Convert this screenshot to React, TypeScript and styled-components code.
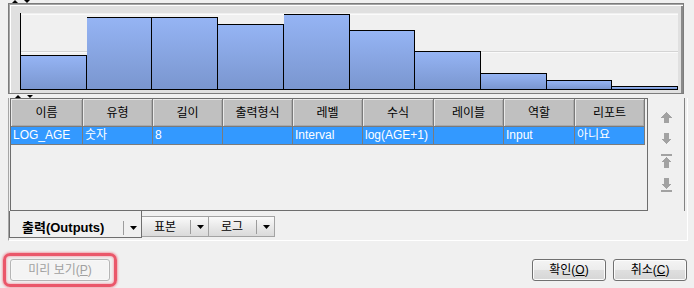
import React from 'react';
import styled, { createGlobalStyle } from 'styled-components';

const GlobalStyle = createGlobalStyle`
  html, body {
    margin: 0;
    padding: 0;
    background: #f0f0f0;
  }
  body {
    font-family: "Liberation Sans", "Noto Sans CJK KR", sans-serif;
    font-size: 12px;
    color: #000;
  }
`;

const Window = styled.div`
  width: 694px;
  height: 288px;
  overflow: hidden;
  background: #f0f0f0;
`;

const Marks = styled.div<{ $left: number; $h: number; $bottom?: boolean }>`
  height: ${(p) => p.$h}px;
  padding-left: ${(p) => p.$left}px;
  display: flex;
  align-items: ${(p) => (p.$bottom ? 'flex-end' : 'flex-start')};
  gap: 6px;
`;

const MarkUp = styled.span`
  width: 0;
  height: 0;
  border-left: 3px solid transparent;
  border-right: 3px solid transparent;
  border-bottom: 3px solid #000;
`;

const MarkDown = styled.span`
  width: 0;
  height: 0;
  border-left: 3px solid transparent;
  border-right: 3px solid transparent;
  border-top: 3px solid #000;
`;

/* ---------- chart ---------- */

const ChartPanel = styled.div`
  box-sizing: border-box;
  margin-left: 8px;
  width: 676px;
  height: 91px;
  border: 1px solid #7c7c7c;
  box-shadow: inset 1px 1px 0 #a4a4a4, inset 2px 2px 0 #fff, inset -2px 0 0 #8a8a8a;
  background: #e0e0e0;
  padding: 9px 5px 3px 11px;
`;

const Plot = styled.div`
  height: 77px;
  border-left: 1px solid #000;
  display: flex;
  align-items: flex-end;
  background:
    linear-gradient(to bottom, transparent 1px, #fbfbfb 1px, #fbfbfb 2px, transparent 2px),
    linear-gradient(to bottom, transparent 38px, #d4d4d4 38px, #d4d4d4 39px, #fafafa 39px, #fafafa 40px, transparent 40px),
    #f0f0f0;
`;

const Bar = styled.div<{ $h: number }>`
  flex: 1;
  box-sizing: border-box;
  height: ${(p) => p.$h}px;
  border: 1px solid #000;
  border-left: none;
  background: linear-gradient(to bottom, #95b4f4, #7a96cf);
`;

/* ---------- grid ---------- */

const COLS = '72px 70px 70px 70px 70px 71px 70px 71px 70px';

const BottomPanel = styled.div`
  box-sizing: border-box;
  margin-left: 8px;
  width: 680px;
  height: 143px;
  border-left: 1px solid #a6a6a6;
  border-right: 1px solid #fff;
  border-bottom: 1px solid #fff;
  display: flex;
  flex-direction: column;
`;

const UpperBox = styled.div`
  box-sizing: border-box;
  width: 676px;
  height: 113px;
  border-right: 1px solid #828282;
  display: flex;
`;

const GridBox = styled.div`
  box-sizing: border-box;
  margin-left: 1px;
  width: 638px;
  height: 113px;
  border: 1px solid #6e6e6e;
  background: #f0f0f0;
`;

const HeaderRow = styled.div`
  display: grid;
  grid-template-columns: ${COLS};
  height: 28px;
`;

const HeaderCell = styled.div`
  box-sizing: border-box;
  background: #c0c0c0;
  border-right: 1px solid #7a7a7a;
  border-bottom: 1px solid #7a7a7a;
  box-shadow: inset 1px 1px 0 #e8e8e8, inset -1px -1px 0 #a9a9a9;
  display: flex;
  align-items: center;
  justify-content: center;
  line-height: 14px;
`;

const DataRow = styled.div`
  display: grid;
  grid-template-columns: ${COLS};
  height: 18px;
`;

const DataCell = styled.div`
  box-sizing: border-box;
  background: #3399ff;
  color: #fff;
  border-right: 1px solid #7b7b7b;
  border-bottom: 1px solid #7b7b7b;
  padding-left: 2px;
  line-height: 17px;
  white-space: nowrap;
  overflow: hidden;
`;

const ArrowColumn = styled.div`
  flex: 1;
  display: flex;
  flex-direction: column;
  align-items: center;
  padding-top: 14px;
  gap: 10px;
`;

const ArrowIcon = styled.svg`
  display: block;
  fill: #a2a2a2;
  shape-rendering: crispEdges;
`;

/* ---------- tabs ---------- */

const TabBar = styled.div`
  height: 29px;
  display: flex;
  align-items: flex-start;
`;

const Tab = styled.div<{ $active?: boolean; $w: number }>`
  box-sizing: border-box;
  width: ${(p) => p.$w}px;
  display: flex;
  align-items: center;
  ${(p) =>
    p.$active
      ? `
    height: 27px;
    padding-top: 8px;
    border: 1px solid #6e6e6e;
    border-top: none;
    background: #f0f0f0;
    font-weight: bold;
    font-size: 13px;
  `
      : `
    margin-top: 5px;
    height: 21px;
    border: 1px solid #a3a3a3;
    border-left: none;
    background: linear-gradient(to bottom, #fafafa, #e9e9e9 50%, #dadada);
  `}
`;

const TabLabel = styled.span`
  flex: 1;
  padding-left: 12px;
  line-height: 14px;
  white-space: nowrap;
`;

const TabSep = styled.span`
  width: 1px;
  height: 14px;
  background: #9c9c9c;
  margin-right: 6px;
`;

const TabArrow = styled.svg`
  display: block;
  margin-right: 4px;
`;

/* ---------- buttons ---------- */

const ButtonBar = styled.div`
  height: 47px;
  padding: 12px 7px 0 3px;
  box-sizing: border-box;
  display: flex;
  align-items: flex-start;
`;

const Highlight = styled.div`
  padding: 3px 4px;
  border: 3px solid rgba(232, 52, 76, 0.82);
  border-radius: 7px;
  box-shadow: 0 0 2px 1px rgba(240, 110, 125, 0.55), inset 0 0 2px 1px rgba(245, 120, 135, 0.45);
`;

const Button = styled.button<{ $w: number; $disabled?: boolean }>`
  box-sizing: border-box;
  width: ${(p) => p.$w}px;
  height: 22px;
  padding: 0;
  font: inherit;
  line-height: 14px;
  border-radius: 3px;
  border: 1px solid ${(p) => (p.$disabled ? '#b5b5b5' : '#707070')};
  color: ${(p) => (p.$disabled ? '#a0a0a0' : '#000')};
  background: ${(p) =>
    p.$disabled ? '#f4f4f4' : 'linear-gradient(to bottom, #f4f4f4, #ececec 50%, #dfdfdf 51%, #d6d6d6)'};
  box-shadow: inset 0 0 0 1px ${(p) => (p.$disabled ? '#f8f8f8' : '#fcfcfc')};
`;

const RightButtons = styled.div`
  margin-left: auto;
  margin-top: 6px;
  display: flex;
  gap: 7px;
`;

const bars = [35, 73, 73, 66, 76, 60, 39, 17, 10, 4];

const headers = ['이름', '유형', '길이', '출력형식', '레벨', '수식', '레이블', '역할', '리포트'];
const row = ['LOG_AGE', '숫자', '8', '', 'Interval', 'log(AGE+1)', '', 'Input', '아니요'];

const DropArrow = () => (
  <TabArrow width="7" height="4" viewBox="0 0 7 4">
    <polygon points="0,0 7,0 3.5,4" fill="#000" />
  </TabArrow>
);

const App = () => {
  return (
    <Window>
      <GlobalStyle />
      <Marks $left={12} $h={3}>
        <MarkUp />
        <MarkDown />
      </Marks>

      <ChartPanel>
        <Plot>
          {bars.map((h, i) => (
            <Bar key={i} $h={h} />
          ))}
        </Plot>
      </ChartPanel>

      <Marks $left={15} $h={4} $bottom>
        <MarkUp />
        <MarkDown />
      </Marks>

      <BottomPanel>
        <UpperBox>
          <GridBox>
            <HeaderRow>
              {headers.map((h) => (
                <HeaderCell key={h}>{h}</HeaderCell>
              ))}
            </HeaderRow>
            <DataRow>
              {row.map((c, i) => (
                <DataCell key={i}>{c}</DataCell>
              ))}
            </DataRow>
          </GridBox>
          <ArrowColumn>
            <ArrowIcon width="11" height="11" viewBox="0 0 11 11">
              <path d="M5.5 0 L11 5.5 H8 V11 H3 V5.5 H0 Z" />
            </ArrowIcon>
            <ArrowIcon width="11" height="11" viewBox="0 0 11 11">
              <path d="M5.5 11 L11 5.5 H8 V0 H3 V5.5 H0 Z" />
            </ArrowIcon>
            <ArrowIcon width="11" height="14" viewBox="0 0 11 14">
              <rect x="0" y="0" width="11" height="2" />
              <path d="M5.5 3 L11 8 H8 V14 H3 V8 H0 Z" />
            </ArrowIcon>
            <ArrowIcon width="11" height="14" viewBox="0 0 11 14">
              <path d="M5.5 11 L11 6 H8 V0 H3 V6 H0 Z" />
              <rect x="0" y="12" width="11" height="2" />
            </ArrowIcon>
          </ArrowColumn>
        </UpperBox>

        <TabBar>
          <Tab $active $w={133}>
            <TabLabel>출력(Outputs)</TabLabel>
            <TabSep />
            <DropArrow />
          </Tab>
          <Tab $w={67}>
            <TabLabel>표본</TabLabel>
            <TabSep />
            <DropArrow />
          </Tab>
          <Tab $w={66}>
            <TabLabel>로그</TabLabel>
            <TabSep />
            <DropArrow />
          </Tab>
        </TabBar>
      </BottomPanel>

      <ButtonBar>
        <Highlight>
          <Button $w={100} $disabled>
            미리 보기(<u>P</u>)
          </Button>
        </Highlight>
        <RightButtons>
          <Button $w={74}>
            확인(<u>O</u>)
          </Button>
          <Button $w={74}>
            취소(<u>C</u>)
          </Button>
        </RightButtons>
      </ButtonBar>
    </Window>
  );
};

export default App;
